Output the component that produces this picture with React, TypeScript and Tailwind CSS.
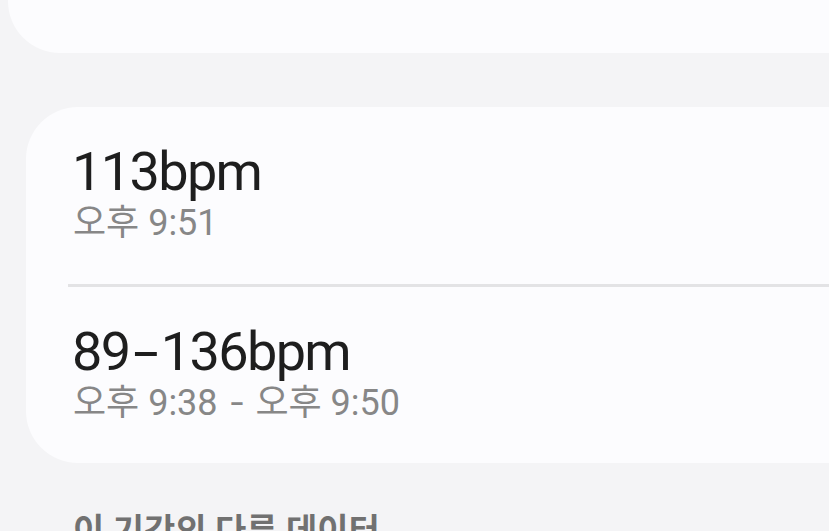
const font = { fontFamily: 'Roboto, "Noto Sans CJK KR", sans-serif' };

function Reading({ value, time, className }: { value: React.ReactNode; time: React.ReactNode; className: string }) {
  return (
    <div className={className}>
      <div className="pl-[46px] text-[54px] leading-none tracking-[-0.03em] text-[#1e1e1e]">{value}</div>
      <div className="mt-[6px] pl-[47px] text-[36px] leading-none text-[#878787]">{time}</div>
    </div>
  );
}

export default function App() {
  return (
    <div className="h-[531px] w-full overflow-hidden bg-[#f4f4f6]" style={font}>
      {/* end of previous card */}
      <div className="ml-[8px] h-[53px] rounded-bl-[52px] bg-[#fcfcfe]" />

      <div className="ml-[26px] mt-[54px] rounded-l-[52px] bg-[#fcfcfe]">
        <Reading value="113bpm" time="오후 9:51" className="h-[177px] pt-[38px]" />
        <div className="ml-[42px] h-[3px] bg-[#e3e3e5]" />
        <Reading
          value={
            <>
              89<span className="mx-[9px] inline-block scale-x-[1.7]">-</span>136bpm
            </>
          }
          time={
            <>
              오후 9:38 <span className="mx-[5px] inline-block scale-x-[1.3]">-</span> 오후 9:50
            </>
          }
          className="h-[176px] pt-[38px]"
        />
      </div>

      <div className="ml-[73px] mt-[51px] text-[34px] font-bold leading-none text-[#717171]">
        이 기간의 다른 데이터
      </div>
    </div>
  );
}
